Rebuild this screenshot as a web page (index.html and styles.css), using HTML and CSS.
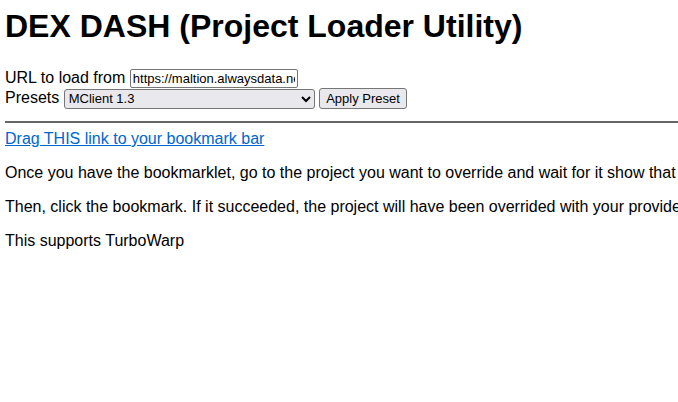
FILE: index.html
```html
<!DOCTYPE html>
<html>
<head>
<meta charset="utf-8">
<link rel="stylesheet" href="styles.css">
</head>
<body>
<div class="page">
<h1 class="title">DEX DASH (Project Loader Utility)</h1>
<div class="form">
<div class="row">URL to load from <input class="url" type="text" value="https://maltion.alwaysdata.net/mclient"></div>
<div class="row">Presets <select class="preset"><option>MClient 1.3</option></select> <button class="apply">Apply Preset</button></div>
</div>
<hr class="rule">
<p class="first"><a class="link" href="#">Drag THIS link to your bookmark bar</a></p>
<p>Once you have the bookmarklet, go to the project you want to override and wait for it show that it has loaded.</p>
<p>Then, click the bookmark. If it succeeded, the project will have been overrided with your provided project.</p>
<p>This supports TurboWarp</p>
</div>
</body>
</html>
```
FILE: styles.css
```css
body {
  margin: 8px 0 8px 5px;
  font-family: "Liberation Sans", Arial, sans-serif;
  font-size: 16px;
  color: #000;
  background: #fff;
}
.page { overflow: hidden; }
.title { font-size: 32px; margin: 0 0 24px; white-space: nowrap; }
.row { line-height: 18px; white-space: nowrap; }
.url {
  font-family: "Liberation Sans", Arial, sans-serif;
  font-size: 13px;
  width: 162px;
  padding: 1px 2px;
  border: 1px solid #767676;
  border-radius: 2px;
  margin: 0;
}
.preset {
  font-family: "Liberation Sans", Arial, sans-serif;
  font-size: 13px;
  width: 251px;
  height: 20px;
  border: 1px solid #767676;
  border-radius: 3px;
  background: #e9e9ed;
  margin: 0;
}
.apply {
  font-family: "Liberation Sans", Arial, sans-serif;
  font-size: 13px;
  height: 21px;
  padding: 1px 6px;
  border: 1px solid #767676;
  border-radius: 3px;
  background: #e9e9ed;
  margin: 0;
}
.rule { margin: 12px 0 0; border: 0; border-top: 2px solid #666; }
p { white-space: nowrap; margin: 16px 0; }
p.first { margin-top: 7px; }
.link { color: #0066cc; }
```
